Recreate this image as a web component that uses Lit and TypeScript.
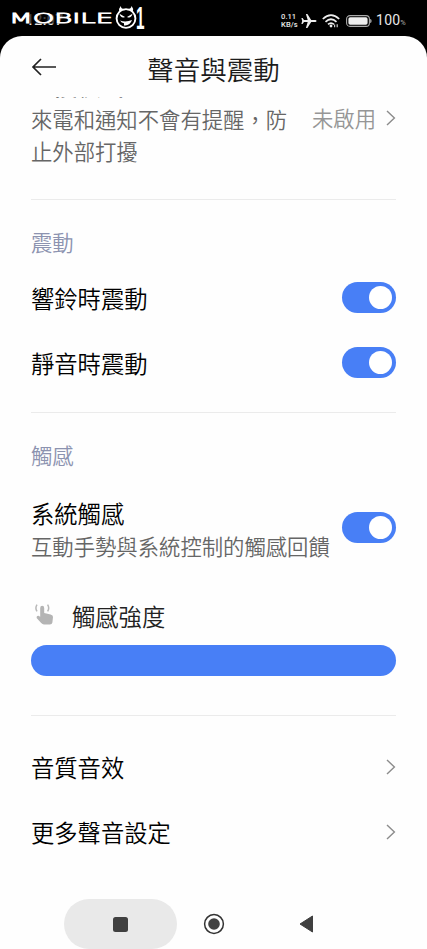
import { LitElement, html, css } from "lit";
import { customElement, property } from "lit/decorators.js";

const chevron = html`<svg width="10" height="16" viewBox="0 0 10 16" style="display:block">
  <path d="M1 1 L8.4 8 L1 15" fill="none" stroke="#8c8c8c" stroke-width="1.4"/>
</svg>`;

@customElement("toggle-switch")
class ToggleSwitch extends LitElement {
  static styles = css`
    :host { display: flex; flex: none; align-items: center; justify-content: flex-end;
      width: 54px; height: 31px; box-sizing: border-box; padding-right: 4px;
      border-radius: 16px; background: #487ff6; }
    .knob { width: 23px; height: 23px; border-radius: 50%; background: #fff; }
  `;
  render() {
    return html`<div class="knob"></div>`;
  }
}

@customElement("setting-row")
class SettingRow extends LitElement {
  @property() label = "";
  static styles = css`
    :host { display: flex; align-items: center; justify-content: space-between; height: 65px; }
    .label { font-size: 23.3px; line-height: 34px; color: #000; white-space: nowrap; }
  `;
  render() {
    return html`<div class="label">${this.label}</div><slot></slot>`;
  }
}

@customElement("status-bar")
class StatusBar extends LitElement {
  static styles = css`
    :host { display: flex; justify-content: space-between; height: 36px; position: relative;
      background: #000; color: #e8e8e8; font-family: Roboto, "Liberation Sans", sans-serif; }
    .time { padding: 12px 0 0 26px; font-size: 14px; line-height: 16px; font-weight: 500; letter-spacing: .4px; }
    .mark { position: absolute; left: 0; top: 0; }
    .word { font-family: "DejaVu Sans", sans-serif; font-weight: 200; font-size: 14.2px; fill: #fff;
      stroke: #fff; stroke-width: .9; }
    .one { font-family: "Liberation Sans", sans-serif; font-weight: 700; font-size: 31px; fill: #fff; }
    .right { display: flex; align-items: center; height: 41px; padding-right: 21px; }
    .speed { width: 18px; font-size: 7.6px; line-height: 7.5px; font-weight: 500; white-space: nowrap; }
    .pct { font-size: 14px; letter-spacing: .2px; margin-left: 4px; line-height: 16px; padding-top: 2px; font-weight: 400; }
    .sign { font-size: 7.5px; color: #aaa; }
    svg { display: block; }
  `;
  render() {
    return html`
      <div class="time">12:07</div>
      <svg class="mark" width="160" height="36" viewBox="0 0 160 36">
        <rect x="8" y="12" width="105" height="11.6" fill="#000" opacity=".7"/>
        <text class="word" x="9" y="23.1" textLength="104" lengthAdjust="spacingAndGlyphs">MOBILE</text>
        <circle cx="126" cy="18.5" r="9.4" fill="#000" stroke="#fff" stroke-width="1.9"/>
        <path d="M119.2 11.5 Q118.5 8.5 120.8 6 Q121 9 124 9 L128 9 Q131 9 131.6 6 Q133.8 8.5 132.8 11.5 Q126 8.5 119.2 11.5Z" fill="#fff"/>
        <path d="M119.5 13.8 L125 17 Q121 19 119.5 13.8Z M132.5 13.8 L127 17 Q131 19 132.5 13.8Z M120 20.5 Q126 22.5 132 20 Q130 26 124 25.4 L124 23.2 Q121.5 23 120 20.5Z" fill="#fff"/>
        <text class="one" x="136" y="28.8" textLength="8.5" lengthAdjust="spacingAndGlyphs">1</text>
      </svg>
      <div class="right">
        <div class="speed">0.11<br>KB/s</div>
        <svg width="16" height="16" viewBox="0 0 16 16" style="margin-left:2px">
          <path d="M15.5 8 Q15.5 6.9 14.3 6.9 L10.2 6.9 L6.4 1 L4.9 1 L6.7 6.9 L3 6.9 L1.6 5 L.4 5 L1.2 8 L.4 11 L1.6 11 L3 9.1 L6.7 9.1 L4.9 15 L6.4 15 L10.2 9.1 L14.3 9.1 Q15.5 9.1 15.5 8Z" fill="#eee"/>
        </svg>
        <svg width="18" height="14" viewBox="0 0 18 14" style="margin-left:5px">
          <g fill="none" stroke="#eee" stroke-width="1.7">
            <path d="M.8 5 Q9 -2.8 17.2 5"/><path d="M3.5 7.8 Q9 2.7 14.5 7.8"/><path d="M6 10.4 Q9 7.8 12 10.4"/>
          </g>
          <circle cx="9" cy="12" r="1.4" fill="#eee"/>
          <path d="M12.6 13.2 V10.6 M15.2 10.2 V13.2" stroke="#ccc" stroke-width="1.2"/>
        </svg>
        <svg width="26" height="12" viewBox="0 0 26 12" style="margin-left:6px">
          <rect x=".6" y=".6" width="22.8" height="10.8" rx="3.4" fill="none" stroke="#aaa" stroke-width="1.1"/>
          <rect x="2.4" y="2.3" width="19.2" height="7.4" rx="1.8" fill="#eee"/>
          <path d="M24.6 4.2 Q26 6 24.6 7.8Z" fill="#bbb" stroke="#bbb" stroke-width=".6"/>
        </svg>
        <div class="pct">100<span class="sign">%</span></div>
      </div>`;
  }
}

@customElement("app-root")
class AppRoot extends LitElement {
  static styles = css`
    :host { display: block; width: 427px; height: 949px; overflow: hidden; background: #000;
      font-family: "Noto Sans CJK TC", sans-serif; font-weight: 350; }
    .sheet { display: flex; flex-direction: column; height: 913px; background: #fefefe;
      border-radius: 22px 22px 0 0; overflow: hidden; }
    .header { flex: none; display: grid; grid-template-columns: 32px 1fr 32px; align-items: center;
      height: 61px; padding: 0 31px; box-sizing: border-box; }
    .header svg { display: block; margin-top: 0; }
    .heading { text-align: center; font-size: 26.5px; line-height: 40px; color: #1c1c1c; padding-top: 4px; }
    .list { flex: 1; overflow: hidden; padding: 0 31px; display: flex; flex-direction: column; }
    .row { display: flex; justify-content: space-between; align-items: center; }
    .first { margin-top: -29px; height: 99px; align-items: flex-start; }
    .title { font-size: 23.3px; line-height: 34px; color: #000; white-space: nowrap; }
    .sub { font-size: 21.35px; line-height: 31.5px; color: #666; }
    .first .sub { width: 262px; margin-top: 1.4px; }
    .value { display: flex; align-items: center; gap: 10px; font-size: 21.35px; line-height: 32px;
      color: #969696; white-space: nowrap; margin-top: 34px; }
    .line { flex: none; height: 1px; background: #ebebeb; }
    .section { font-size: 21.35px; line-height: 32px; color: #8c93b0; }
    .system { height: 66px; margin-top: 23px; }
    .system .title { margin-top: 3px; }
    .system .sub { white-space: nowrap; }
    .strength { display: flex; align-items: center; gap: 17px; height: 34px; margin-top: 39px;
      font-size: 23.3px; color: #222; padding-left: 4px; }
    .strength svg { margin-top: -3px; }
    .bar { flex: none; height: 31px; border-radius: 16px; background: #487ff6; margin-top: 12px; }
    .nav { flex: none; height: 50px; display: flex; align-items: center; padding-left: 64px; }
    .pill { width: 113px; height: 50px; border-radius: 25px; background: #e9e9e9;
      display: flex; align-items: center; justify-content: center; }
    .recent { width: 15px; height: 15px; border-radius: 2.5px; background: #404040; }
    svg { display: block; }
  `;
  render() {
    return html`
      <status-bar></status-bar>
      <div class="sheet">
        <div class="header">
          <svg width="27" height="18" viewBox="0 0 27 18">
            <path d="M25 9 H2 M10 1 L2 9 L10 17" fill="none" stroke="#222" stroke-width="1.7"/>
          </svg>
          <div class="heading">聲音與震動</div>
        </div>
        <div class="list">
          <div class="row first">
            <div><div class="title">勿擾模式</div><div class="sub">來電和通知不會有提醒，防止外部打擾</div></div>
            <div class="value">未啟用${chevron}</div>
          </div>
          <div class="line" style="margin-top:32px"></div>
          <div class="section" style="margin-top:26px">震動</div>
          <setting-row label="響鈴時震動" style="margin-top:7px"><toggle-switch></toggle-switch></setting-row>
          <setting-row label="靜音時震動"><toggle-switch></toggle-switch></setting-row>
          <div class="line" style="margin-top:17px"></div>
          <div class="section" style="margin-top:26px">觸感</div>
          <div class="row system">
            <div><div class="title">系統觸感</div><div class="sub">互動手勢與系統控制的觸感回饋</div></div>
            <toggle-switch></toggle-switch>
          </div>
          <div class="strength">
            <svg width="20" height="23" viewBox="0 0 20 23">
              <path d="M5.2 5 Q5.2 2.8 7.2 2.8 Q9.2 2.8 9.2 5 V10 L15.6 11.4 Q18.2 12 18 14 L17.4 19.4 Q17 21.4 14.8 21.4 H9 Q7.4 21.4 6.2 20 L1.6 15 Q1.4 12.6 3.4 12.8 L5.2 13.8Z" fill="#b4b4b4"/>
              <path d="M2 1.6 Q-.2 5 2 8.4 M12.6 1.6 Q14.8 5 12.6 8.4" fill="none" stroke="#b8b8b8" stroke-width="1.5"/>
            </svg>
            <span>觸感強度</span>
          </div>
          <div class="bar"></div>
          <div class="line" style="margin-top:39px"></div>
          <setting-row label="音質音效" style="margin-top:18px">${chevron}</setting-row>
          <setting-row label="更多聲音設定">${chevron}</setting-row>
        </div>
        <div class="nav">
          <div class="pill"><div class="recent"></div></div>
          <svg width="22" height="22" viewBox="0 0 22 22" style="margin-left:25.5px">
            <circle cx="11" cy="11" r="9.4" fill="none" stroke="#333" stroke-width="1.5"/>
            <circle cx="11" cy="11" r="5.8" fill="#404040"/>
          </svg>
          <svg width="15" height="18" viewBox="0 0 15 18" style="margin-left:74px">
            <path d="M1 9 L13.5 1 V17Z" fill="#404040" stroke="#404040" stroke-width="1" stroke-linejoin="round"/>
          </svg>
        </div>
      </div>`;
  }
}
